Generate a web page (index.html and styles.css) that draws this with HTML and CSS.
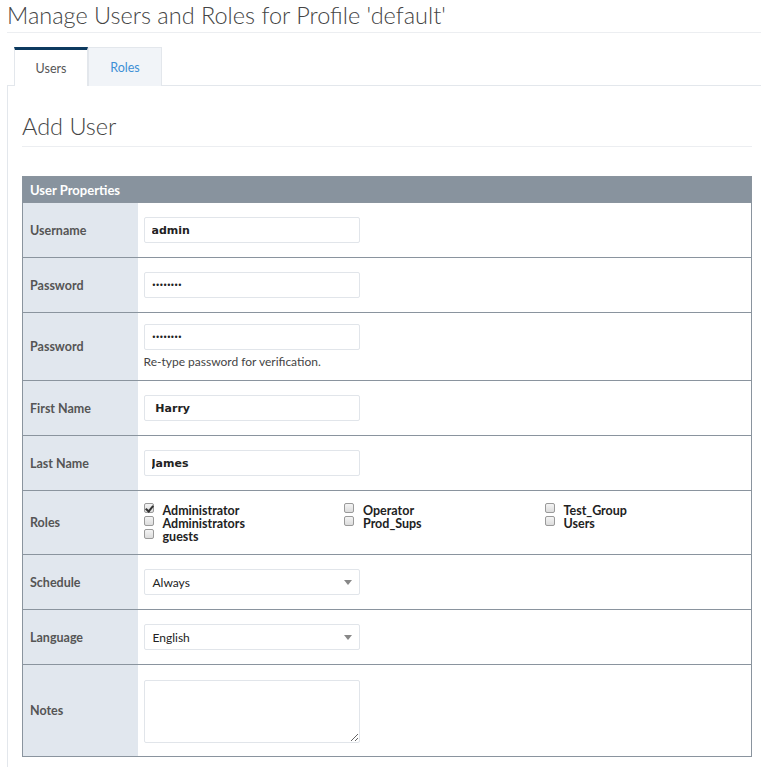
FILE: index.html
```html
<!DOCTYPE html>
<html lang="en">

<head>
    <meta charset="UTF-8">
    <title>Manage Users and Roles</title>
    <link rel="stylesheet" href="styles.css">
</head>

<body>
    <h1 class="page-title">Manage Users and Roles for Profile 'default'</h1>

    <div class="tabs">
        <div class="tab tab-active">Users</div>
        <div class="tab">Roles</div>
    </div>

    <div class="panel">
        <h2 class="panel-title">Add User</h2>

        <table class="props">
            <colgroup>
                <col class="col-label">
                <col>
            </colgroup>
            <tr class="row-head">
                <th class="props-head" colspan="2">User Properties</th>
            </tr>
            <tr>
                <td class="prop-label">Username</td>
                <td class="prop-value"><input class="field field-bold" type="text" value="admin"></td>
            </tr>
            <tr>
                <td class="prop-label">Password</td>
                <td class="prop-value"><input class="field field-pass" type="password" value="password"></td>
            </tr>
            <tr class="row-hint">
                <td class="prop-label">Password</td>
                <td class="prop-value">
                    <input class="field field-pass" type="password" value="password">
                    <div class="hint">Re-type password for verification.</div>
                </td>
            </tr>
            <tr>
                <td class="prop-label">First Name</td>
                <td class="prop-value"><input class="field field-bold" type="text" value=" Harry"></td>
            </tr>
            <tr>
                <td class="prop-label">Last Name</td>
                <td class="prop-value"><input class="field field-bold" type="text" value="James"></td>
            </tr>
            <tr class="row-roles">
                <td class="prop-label">Roles</td>
                <td class="prop-value">
                    <div class="roles">
                        <div class="role-col">
                            <label class="role"><input type="checkbox" checked> Administrator</label>
                            <label class="role"><input type="checkbox"> Administrators</label>
                            <label class="role"><input type="checkbox"> guests</label>
                        </div>
                        <div class="role-col">
                            <label class="role"><input type="checkbox"> Operator</label>
                            <label class="role"><input type="checkbox"> Prod_Sups</label>
                        </div>
                        <div class="role-col">
                            <label class="role"><input type="checkbox"> Test_Group</label>
                            <label class="role"><input type="checkbox"> Users</label>
                        </div>
                    </div>
                </td>
            </tr>
            <tr>
                <td class="prop-label">Schedule</td>
                <td class="prop-value">
                    <div class="select">Always<span class="caret"></span></div>
                </td>
            </tr>
            <tr>
                <td class="prop-label">Language</td>
                <td class="prop-value">
                    <div class="select">English<span class="caret"></span></div>
                </td>
            </tr>
            <tr class="row-notes">
                <td class="prop-label">Notes</td>
                <td class="prop-value"><textarea class="notes"></textarea></td>
            </tr>
        </table>
    </div>
</body>

</html>
```

FILE: styles.css
```css
/* Page basics */
* {
    box-sizing: border-box;
}

body {
    margin: 0;
    padding: 0 0 0 7px;
    font-family: 'Lato', 'Open Sans', sans-serif;
    color: #555;
    background: #fff;
}

/* Page heading */
.page-title {
    margin: 0;
    padding: 2px 0 4px 0;
    font-size: 23.5px;
    font-weight: 300;
    color: #444;
    border-bottom: 1px solid #eceef1;
    line-height: 26px;
}

/* Tabs */
.tabs {
    display: flex;
    padding: 14px 0 0 7px;
}

.tab {
    width: 74px;
    height: 39px;
    display: flex;
    align-items: center;
    justify-content: center;
    font-size: 12.5px;
    color: #3d8fd6;
    background: #f1f4f8;
    border: 1px solid #e3e7ec;
    border-bottom: none;
    margin-bottom: -1px;
}

.tab-active {
    color: #555;
    background: #fff;
    border-top: 3px solid #0d3a5f;
    padding-top: 1px;
    position: relative;
}

/* Content panel */
.panel {
    border-top: 1px solid #e3e7ec;
    border-left: 1px solid #e3e7ec;
    padding: 27px 9px 10px 14px;
}

.panel-title {
    margin: 0 0 29px;
    padding-bottom: 7px;
    font-size: 23.5px;
    font-weight: 300;
    line-height: 26px;
    color: #444;
    border-bottom: 1px solid #eceef1;
}

/* Properties table */
.props {
    width: 730px;
    table-layout: fixed;
    border-collapse: collapse;
    border: 1px solid #8a949e;
    font-size: 12px;
}

.col-label {
    width: 115px;
}

.props tr {
    height: 55px;
    border-top: 1px solid #8a949e;
}

.props tr.row-head {
    height: 26px;
}

.props tr.row-hint {
    height: 68px;
}

.props tr.row-roles {
    height: 64px;
}

.props tr.row-notes {
    height: 92px;
}

.props-head {
    background: #88939e;
    color: #fff;
    text-align: left;
    font-size: 13px;
    font-weight: bold;
    padding: 0 7px;
}

.prop-label {
    background: #e1e7ee;
    font-weight: bold;
    font-size: 12.5px;
    color: #555;
    padding: 0 7px;
}

.prop-value {
    padding: 0 6px;
}

/* Inputs */
.field {
    display: block;
    width: 216px;
    height: 26px;
    border: 1px solid #e1e5ea;
    border-radius: 2px;
    padding: 0 7px;
    font-family: 'DejaVu Sans', sans-serif;
    font-size: 11px;
    color: #222;
    outline: none;
}

.field-bold {
    font-weight: bold;
}

.field-pass {
    letter-spacing: -1px;
    font-size: 8px;
}

.hint {
    margin-top: 4px;
    font-size: 12px;
    color: #444;
}

/* Roles */
.roles {
    display: flex;
    padding: 4px 0 3px;
}

.role-col {
    width: 204px;
    display: flex;
    flex-direction: column;
}

.role {
    display: flex;
    align-items: center;
    height: 13px;
    line-height: 13px;
    font-size: 12.5px;
    font-weight: bold;
    color: #222;
}

.role input {
    appearance: none;
    flex: none;
    width: 10px;
    height: 10px;
    margin: 0 9px 0 0;
    border: 1px solid #9a9a9a;
    border-radius: 2px;
    background: linear-gradient(#f4f4f4, #dcdcdc);
    position: relative;
    top: -2px;
}

.role input:checked::after {
    content: "";
    position: absolute;
    left: 2px;
    top: 0;
    width: 3px;
    height: 6px;
    border-right: 2px solid #333;
    border-bottom: 2px solid #333;
    transform: rotate(40deg);
}

/* Select boxes */
.select {
    width: 216px;
    height: 26px;
    border: 1px solid #e1e5ea;
    border-radius: 2px;
    padding: 0 8px;
    display: flex;
    align-items: center;
    justify-content: space-between;
    font-size: 12px;
    color: #222;
}

.caret {
    width: 0;
    height: 0;
    border-left: 4px solid transparent;
    border-right: 4px solid transparent;
    border-top: 5px solid #888;
    margin-right: -1px;
}

/* Notes box */
.notes {
    display: block;
    width: 216px;
    height: 63px;
    margin-top: 1px;
    border: 1px solid #e1e5ea;
    border-radius: 2px;
    outline: none;
}
```
